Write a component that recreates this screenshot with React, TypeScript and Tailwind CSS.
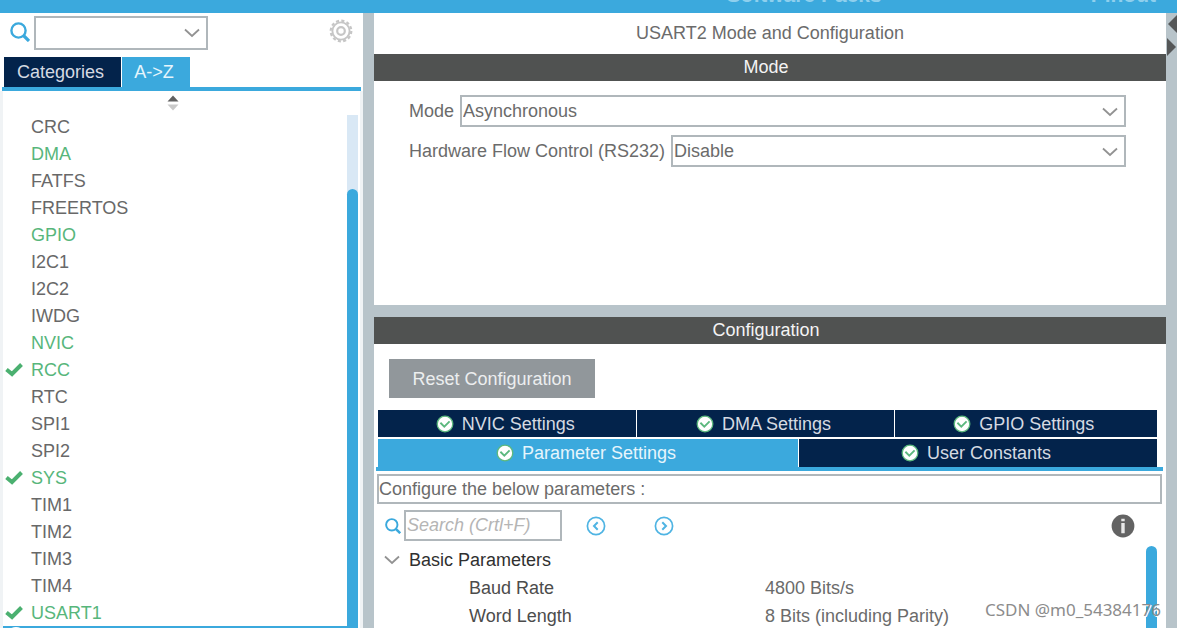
import React, { useState } from "react"

const peripherals = [
  { name: "CRC" },
  { name: "DMA", enabled: true },
  { name: "FATFS" },
  { name: "FREERTOS" },
  { name: "GPIO", enabled: true },
  { name: "I2C1" },
  { name: "I2C2" },
  { name: "IWDG" },
  { name: "NVIC", enabled: true },
  { name: "RCC", enabled: true, checked: true },
  { name: "RTC" },
  { name: "SPI1" },
  { name: "SPI2" },
  { name: "SYS", enabled: true, checked: true },
  { name: "TIM1" },
  { name: "TIM2" },
  { name: "TIM3" },
  { name: "TIM4" },
  { name: "USART1", enabled: true, checked: true },
]

const parameters = [
  { name: "Baud Rate", value: "4800 Bits/s" },
  { name: "Word Length", value: "8 Bits (including Parity)" },
]

function SearchIcon({ className }: { className: string }) {
  return (
    <svg viewBox="0 0 20 20" className={className} fill="none" stroke="#3ba9dd" strokeWidth="2.4">
      <circle cx="8.5" cy="8.5" r="7.1" />
      <path d="M13.5 13.5 L19 19" strokeWidth="3.2" />
    </svg>
  )
}

function Chevron({ className = "" }: { className?: string }) {
  return (
    <svg viewBox="0 0 16 10" className={`w-4 h-[10px] ${className}`} fill="none" stroke="#929292" strokeWidth="1.8">
      <path d="M1 1.5 L8 8 L15 1.5" />
    </svg>
  )
}

function GearIcon() {
  return (
    <svg viewBox="0 0 24 24" className="w-6 h-6" fill="none" stroke="#c6c6c6">
      <circle cx="12" cy="12" r="10.3" strokeWidth="2.2" strokeDasharray="3.1 2.293" />
      <circle cx="12" cy="12" r="8.6" strokeWidth="1.9" />
      <circle cx="12" cy="12" r="3.8" strokeWidth="2.2" />
    </svg>
  )
}

function Tick() {
  return (
    <svg viewBox="0 0 18 14" className="w-[18px] h-[14px]" fill="none" stroke="#4bb070" strokeWidth="4">
      <path d="M1.5 6.5 L7 11 L16.5 1.5" />
    </svg>
  )
}

function StatusIcon() {
  return (
    <svg viewBox="0 0 18 18" className="w-[18px] h-[18px] shrink-0">
      <circle cx="9" cy="9" r="7.8" fill="#fff" stroke="#5cb87e" strokeWidth="1.3" />
      <path d="M4.4 7.8 L8.3 11.6 L13.6 6.4" fill="none" stroke="#5cb87e" strokeWidth="1.9" />
    </svg>
  )
}

function ArrowCircle({ d }: { d: string }) {
  return (
    <svg viewBox="0 0 20 20" className="w-5 h-5" fill="none" stroke="#4fb4e3">
      <circle cx="10" cy="10" r="8.6" strokeWidth="1.7" />
      <path d={d} strokeWidth="2" />
    </svg>
  )
}

function InfoIcon() {
  return (
    <svg viewBox="0 0 24 24" className="w-6 h-6">
      <circle cx="12" cy="12" r="11.4" fill="#636363" />
      <path d="M10.3 4.7h3.4v2.6h-3.4z M10.3 9h3.4v10.2h-3.4z" fill="#e8e8e8" />
    </svg>
  )
}

function Combo({ id, label, options, className = "" }: { id: string; label?: string; options: string[]; className?: string }) {
  return (
    <div className={`relative ${className}`}>
      <select
        id={id}
        aria-label={label}
        className="w-full h-full appearance-none border-2 border-[#b0b7bb] bg-white pl-px pr-8 text-[#6b6b6b] outline-none"
      >
        {options.map((option) => (
          <option key={option}>{option}</option>
        ))}
      </select>
      <Chevron className="absolute right-2 top-3 pointer-events-none" />
    </div>
  )
}

function SectionBar({ title }: { title: string }) {
  return (
    <h2 className="h-[27px] shrink-0 bg-[#505251] pr-2 text-[#f4f4f4] text-center leading-[27px]">{title}</h2>
  )
}

function ConfigTab({ label, active, onClick }: { label: string; active: boolean; onClick: () => void }) {
  return (
    <button
      type="button"
      onClick={onClick}
      className={`flex items-center justify-center gap-2 pr-1 ${
        active ? "bg-[#3ba9dd] text-[#e6f5fc]" : "bg-[#03234b] text-[#d5dae2]"
      }`}
    >
      <StatusIcon />
      {label}
    </button>
  )
}

function Sidebar() {
  return (
    <aside className="w-[363px] shrink-0 flex flex-col bg-white">
      <div className="h-11 flex items-start pl-[10px] pr-[10px] pt-[3px]">
        <SearchIcon className="w-5 h-5 mt-[6px] mr-1" />
        <Combo id="filter" label="Filter" options={[""]} className="w-[174px] h-[34px]" />
        <button type="button" aria-label="Settings" className="ml-auto mt-[3px]">
          <GearIcon />
        </button>
      </div>

      <div className="mx-[2px] pl-[2px] flex gap-px border-b-4 border-[#3ba9dd]">
        <button type="button" className="h-[30px] w-[117px] bg-[#03234b] pr-1 text-[#d5dae2]">Categories</button>
        <button type="button" className="h-[30px] w-[68px] bg-[#3ba9dd] pr-1 text-[#e6f5fc]">{"A->Z"}</button>
      </div>

      <div className="flex-1 min-h-0 flex border-x-[3px] border-[#f0f3f5] pr-[2px]">
        <div className="flex-1">
          <button type="button" aria-label="Sort" className="flex w-full h-[22px] justify-center pt-1 pr-1">
            <svg viewBox="0 0 12 16" className="w-3 h-4">
              <path d="M6 0.5 L11.5 6.5 H0.5z" fill="#606060" />
              <path d="M0.5 9.5 H11.5 L6 15.5z" fill="#c9c9c9" />
            </svg>
          </button>
          <ul>
            {peripherals.map((item) => (
              <li
                key={item.name}
                className={`flex items-center h-[27px] pl-[2px] ${item.enabled ? "text-[#57b67b]" : "text-[#686868]"}`}
              >
                <span className="w-[26px]">{item.checked && <Tick />}</span>
                {item.name}
              </li>
            ))}
            <li className="h-[27px] bg-[#3ba9dd] pl-[2px]">
              <svg viewBox="0 0 22 22" className="w-[22px] h-[22px]">
                <circle cx="11" cy="11" r="10" fill="#fff" />
              </svg>
            </li>
          </ul>
        </div>
        <div className="w-[11px] mt-6 pt-[74px] bg-[#d9e8f5] flex">
          <div className="flex-1 rounded-t-md bg-[#3ba9dd]" />
        </div>
      </div>
    </aside>
  )
}

function ModePanel() {
  return (
    <section className="h-[292px] shrink-0 flex flex-col bg-white text-[#6b6b6b]">
      <h1 className="h-[41px] text-center leading-[41px]">USART2 Mode and Configuration</h1>
      <SectionBar title="Mode" />
      <div className="flex flex-col gap-2 pt-[14px] pl-[35px] pr-10">
        <div className="flex items-center gap-[6px]">
          <label htmlFor="mode">Mode</label>
          <Combo id="mode" options={["Asynchronous", "Synchronous", "Disable"]} className="flex-1 h-8" />
        </div>
        <div className="flex items-center gap-[6px]">
          <label htmlFor="flow">Hardware Flow Control (RS232)</label>
          <Combo id="flow" options={["Disable", "CTS Only", "RTS Only"]} className="flex-1 h-8" />
        </div>
      </div>
    </section>
  )
}

function ConfigurationPanel() {
  const [tab, setTab] = useState("Parameter Settings")

  return (
    <section className="flex-1 min-h-0 flex flex-col bg-white text-[#6b6b6b]">
      <SectionBar title="Configuration" />
      <div className="pt-[15px] pl-[15px] pb-3">
        <button type="button" className="h-[39px] w-[206px] bg-[#91979b] text-[#eceeef]">
          Reset Configuration
        </button>
      </div>

      <div className="ml-[2px] mr-[3px] pl-[2px] pr-[6px] border-b-4 border-[#3ba9dd]">
        <div className="grid grid-cols-[258fr_256fr_262fr] gap-px h-[27px] mb-[2px]">
          {["NVIC Settings", "DMA Settings", "GPIO Settings"].map((label) => (
            <ConfigTab key={label} label={label} active={tab === label} onClick={() => setTab(label)} />
          ))}
        </div>
        <div className="grid grid-cols-[54fr_46fr] gap-px h-[28px]">
          {["Parameter Settings", "User Constants"].map((label) => (
            <ConfigTab key={label} label={label} active={tab === label} onClick={() => setTab(label)} />
          ))}
        </div>
      </div>

      <p className="mt-[3px] ml-[3px] mr-1 h-[30px] border-2 border-[#b0b7bb] leading-[26px]">
        Configure the below parameters :
      </p>

      <div className="flex items-center mt-[6px] pl-[11px] pr-[31px]">
        <SearchIcon className="w-4 h-4 mr-[3px]" />
        <input
          type="text"
          aria-label="Search"
          placeholder="Search (Crtl+F)"
          className="w-[158px] h-[31px] border-2 border-[#b0b7bb] pl-px outline-none placeholder:italic placeholder:text-[#b5b5b5]"
        />
        <button type="button" aria-label="Previous" className="ml-6">
          <ArrowCircle d="M11.7 6.3 L8 10 L11.7 13.7" />
        </button>
        <button type="button" aria-label="Next" className="ml-12">
          <ArrowCircle d="M8.3 6.3 L12 10 L8.3 13.7" />
        </button>
        <button type="button" aria-label="Information" className="ml-auto">
          <InfoIcon />
        </button>
      </div>

      <div className="flex-1 min-h-0 flex mt-[5px] pl-[10px] pr-[9px]">
        <div className="flex-1">
          <button type="button" className="flex items-center gap-[9px] h-7 text-[#303030]">
            <Chevron />
            Basic Parameters
          </button>
          <table className="w-full">
            <tbody>
              {parameters.map((row) => (
                <tr key={row.name} className="h-7">
                  <th scope="row" className="w-[381px] p-0 pl-[85px] text-left font-normal text-[#4c4c4c]">{row.name}</th>
                  <td className="p-0">{row.value}</td>
                </tr>
              ))}
            </tbody>
          </table>
        </div>
        <div className="w-[11px] rounded-t-md bg-[#3ba9dd]" />
      </div>
    </section>
  )
}

export default function App() {
  return (
    <div className="relative h-screen flex flex-col overflow-hidden bg-[#b8c4ca] font-['Liberation_Sans',Arial,sans-serif] text-[18px] leading-6">
      <header className="h-[13px] shrink-0 flex items-end justify-end gap-[209px] pr-[21px] pb-[6px] overflow-hidden bg-[#3ba9dd] text-[21px] font-bold text-[#8fd0ee]">
        <a href="#packs">Software Packs</a>
        <a href="#pinout">Pinout</a>
      </header>

      <div className="flex-1 min-h-0 flex">
        <Sidebar />
        <main className="flex-1 min-w-0 ml-[11px] flex flex-col gap-3">
          <ModePanel />
          <ConfigurationPanel />
        </main>
        <div className="w-[11px] shrink-0">
          <svg viewBox="0 0 11 44" className="w-[11px] h-[44px]" fill="#555758">
            <path d="M11 2 V20 L2 11z" />
            <path d="M1 25 L10 34 L1 43z" />
          </svg>
        </div>
      </div>

      <span className="absolute right-4 bottom-[6px] font-['Noto_Sans',sans-serif] text-[17px] text-[#8c8c8c] [text-shadow:1px_1px_0_#fff]">
        CSDN @m0_54384176
      </span>
    </div>
  )
}
